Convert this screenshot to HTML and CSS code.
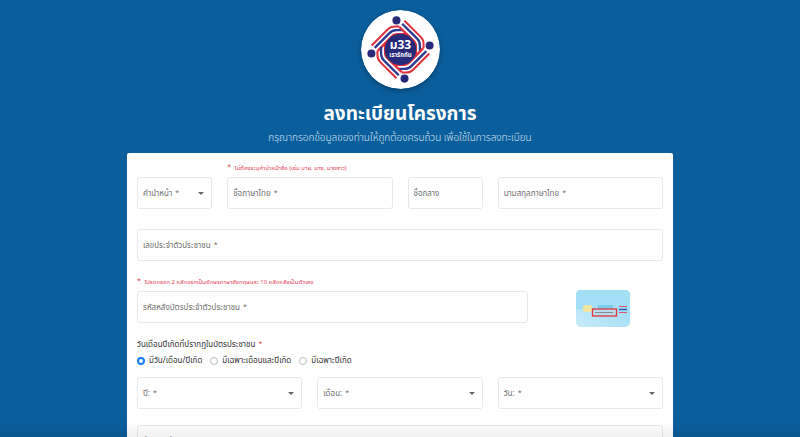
FILE: index.html
```html
<!DOCTYPE html>
<html lang="th">
<head>
    <meta charset="UTF-8">
    <meta name="viewport" content="width=device-width, initial-scale=1.0">
    <title>ลงทะเบียนโครงการ</title>
    <link rel="stylesheet" href="styles.css">
</head>
<body>
    <header class="header">
        <svg class="logo" viewBox="34 29 236 236" role="img" aria-label="ม33 เรารักกัน">
            <defs>
                <!-- one arm of the flag ribbon, turned four times -->
                <g id="arm" fill="none">
                    <path d="M66 135 L115 86 Q123 78 136 78 L148 78" stroke="#e0303c" stroke-width="6"/>
                    <path d="M75 142 L119 98 Q127 89 140 89 L160 89" stroke="#2b3990" stroke-width="7"/>
                    <path d="M84 151 L124 110 Q131 101 143 101 L172 101" stroke="#e0303c" stroke-width="7"/>
                    <circle cx="140" cy="60" r="12" fill="#262a78"/>
                </g>
            </defs>
            <circle cx="152" cy="147" r="118" fill="#fff"/>
            <use href="#arm"/>
            <use href="#arm" transform="rotate(90 152 147)"/>
            <use href="#arm" transform="rotate(180 152 147)"/>
            <use href="#arm" transform="rotate(270 152 147)"/>
            <circle cx="152" cy="147" r="47" fill="#262a78"/>
            <text x="152" y="147" class="logo-name">ม33</text>
            <text x="152" y="169" class="logo-sub">เรารักกัน</text>
        </svg>
        <h1>ลงทะเบียนโครงการ</h1>
        <p>กรุณากรอกข้อมูลของท่านให้ถูกต้องครบถ้วน เพื่อใช้ในการลงทะเบียน</p>
    </header>

    <main class="card">
        <form class="form">
            <div class="field col-2">
                <select id="prefix"><option value=""></option><option>นาย</option><option>นาง</option><option>นางสาว</option></select>
                <label for="prefix">คำนำหน้า <span class="star">*</span></label>
            </div>
            <div class="col-4">
                <p class="hint"><span class="star">*</span> ไม่ต้องระบุคำนำหน้าชื่อ (เช่น นาย, นาง, นางสาว)</p>
                <div class="field">
                    <input type="text" id="firstName">
                    <label for="firstName">ชื่อภาษาไทย <span class="star">*</span></label>
                </div>
            </div>
            <div class="field col-2">
                <input type="text" id="middleName">
                <label for="middleName">ชื่อกลาง</label>
            </div>
            <div class="field col-4">
                <input type="text" id="lastName">
                <label for="lastName">นามสกุลภาษาไทย <span class="star">*</span></label>
            </div>

            <div class="field col-12 spaced">
                <input type="text" id="citizenId">
                <label for="citizenId">เลขประจำตัวประชาชน <span class="star">*</span></label>
            </div>

            <div class="col-9">
                <p class="hint"><span class="star">*</span> โปรดกรอก 2 หลักแรกเป็นอักษรภาษาอังกฤษและ 10 หลักหลังเป็นตัวเลข</p>
                <div class="field">
                    <input type="text" id="laserId">
                    <label for="laserId">รหัสหลังบัตรประจำตัวประชาชน <span class="star">*</span></label>
                </div>
            </div>
            <div class="col-3 card-sample">
                <svg viewBox="0 0 54 37" role="img" aria-label="ตัวอย่างหลังบัตรประชาชน">
                    <defs>
                        <linearGradient id="sky" x1="0" y1="1" x2="1" y2="0">
                            <stop offset="0" stop-color="#c9ebfa"/>
                            <stop offset="1" stop-color="#93d9f6"/>
                        </linearGradient>
                    </defs>
                    <rect width="54" height="37" rx="5" fill="url(#sky)"/>
                    <path d="M0 19 Q12 19 20 23 Q32 27 54 20 V5 Q54 0 49 0 H5 Q0 0 0 5Z" fill="#a3dff6"/>
                    <rect x="7" y="15" width="9" height="7" rx="2" fill="#f0e4a2"/>
                    <rect x="22" y="15" width="15" height="4" fill="#7ccbed"/>
                    <rect x="16.500" y="19" width="24" height="7" fill="#b5dff0" stroke="#e8303a" stroke-width="1.300"/>
                    <path d="M19 22.500h18" stroke="#8b8b93"/>
                    <path d="M43 16.500h8M43 22.500h8" stroke="#e0526c"/>
                    <path d="M43 19.500h8" stroke="#3159a8" stroke-width="1.500"/>
                </svg>
            </div>

            <fieldset class="birth col-12">
                <legend>วันเดือนปีเกิดที่ปรากฏในบัตรประชาชน <span class="star">*</span></legend>
                <label><input type="radio" name="birthType" checked> มีวัน/เดือน/ปีเกิด</label>
                <label><input type="radio" name="birthType"> มีเฉพาะเดือนและปีเกิด</label>
                <label><input type="radio" name="birthType"> มีเฉพาะปีเกิด</label>
            </fieldset>

            <div class="field col-4">
                <select id="year"><option value=""></option></select>
                <label for="year">ปี: <span class="star">*</span></label>
            </div>
            <div class="field col-4">
                <select id="month"><option value=""></option></select>
                <label for="month">เดือน: <span class="star">*</span></label>
            </div>
            <div class="field col-4">
                <select id="day"><option value=""></option></select>
                <label for="day">วัน: <span class="star">*</span></label>
            </div>

            <div class="field col-12">
                <input type="text" id="houseNo">
                <label for="houseNo">บ้านเลขที่ <span class="star">*</span></label>
            </div>
        </form>
    </main>
    <div class="fade"></div>
</body>
</html>
```

FILE: styles.css
```css
* {
    box-sizing: border-box;
}
body {
    margin: 0;
    height: 100vh;
    overflow: hidden;
    background-color: #0b5e9c;
    font-family: "Noto Sans Thai", "Noto Sans", sans-serif;
    font-size: 8px;
    color: #333;
}
.header {
    display: flex;
    flex-direction: column;
    align-items: center;
    padding-top: 10px;
    color: #fff;
}
.logo {
    width: 79px;
    height: 79px;
    border-radius: 50%;
    box-shadow: 0 2px 5px rgba(0, 0, 0, 0.3);
}
.logo-name,
.logo-sub {
    fill: #fff;
    font-weight: bold;
    text-anchor: middle;
}
.logo-name {
    font-size: 36px;
}
.logo-sub {
    font-size: 18px;
}
.header h1 {
    margin: 13px 0 0;
    font-size: 19px;
    line-height: 26px;
    font-weight: bold;
}
.header p {
    margin: 3px 0 0;
    font-size: 10px;
    font-weight: 300;
    line-height: 14px;
    color: #cfe0ed;
}
.card {
    max-width: 546px;
    margin: 8px auto 0;
    padding: 10px;
    background: #fff;
    border-radius: 2px;
}
.form {
    display: grid;
    grid-template-columns: repeat(12, 1fr);
    gap: 16px 15px;
    align-items: end;
}
.col-2 {
    grid-column: span 2;
}
.col-3 {
    grid-column: span 3;
}
.col-4 {
    grid-column: span 4;
}
.col-9 {
    grid-column: span 9;
}
.col-12 {
    grid-column: span 12;
}
.spaced {
    margin-top: 4px;
}
.hint {
    margin: 0 0 2px;
    font-size: 6px;
    line-height: 12px;
    color: #e2445a;
    white-space: nowrap;
}
.star {
    margin-left: 1px;
    font-size: 7px;
    line-height: 1;
    vertical-align: 1px;
}
.hint .star {
    margin: 0 2px 0 0;
}
.field {
    position: relative;
}
.field input,
.field select {
    display: block;
    width: 100%;
    height: 32px;
    padding: 0 6px;
    border: 1px solid #e8e8e8;
    border-radius: 3px;
    background: #fff;
    font: inherit;
    appearance: none;
}
.field label {
    position: absolute;
    left: 6px;
    top: 0;
    line-height: 34px;
    color: #707070;
    pointer-events: none;
}
.field:has(select)::after {
    content: "";
    position: absolute;
    right: 8px;
    top: 15px;
    border: 3px solid transparent;
    border-top-color: #666;
    border-bottom: 0;
}
.card-sample {
    margin-bottom: -4px;
}
.card-sample svg {
    width: 54px;
    height: 37px;
    display: block;
    margin: 0 auto;
}
.birth {
    display: flex;
    gap: 8px;
    margin: 0 0 -6px;
    padding: 4px 0 0;
    border: 0;
    line-height: 12px;
}
.birth legend {
    padding: 0;
}
.birth legend .star {
    color: #e2445a;
}
.birth label {
    display: flex;
    align-items: center;
    gap: 4px;
}
.birth input {
    appearance: none;
    width: 8px;
    height: 8px;
    margin: 0;
    border: 1px solid #bbb;
    border-radius: 50%;
}
.birth input:checked {
    border: 2px solid #157efb;
}
.fade {
    position: fixed;
    left: 0;
    right: 0;
    bottom: 0;
    height: 16px;
    background: linear-gradient(transparent, rgba(0, 0, 0, 0.06));
    pointer-events: none;
}
```
